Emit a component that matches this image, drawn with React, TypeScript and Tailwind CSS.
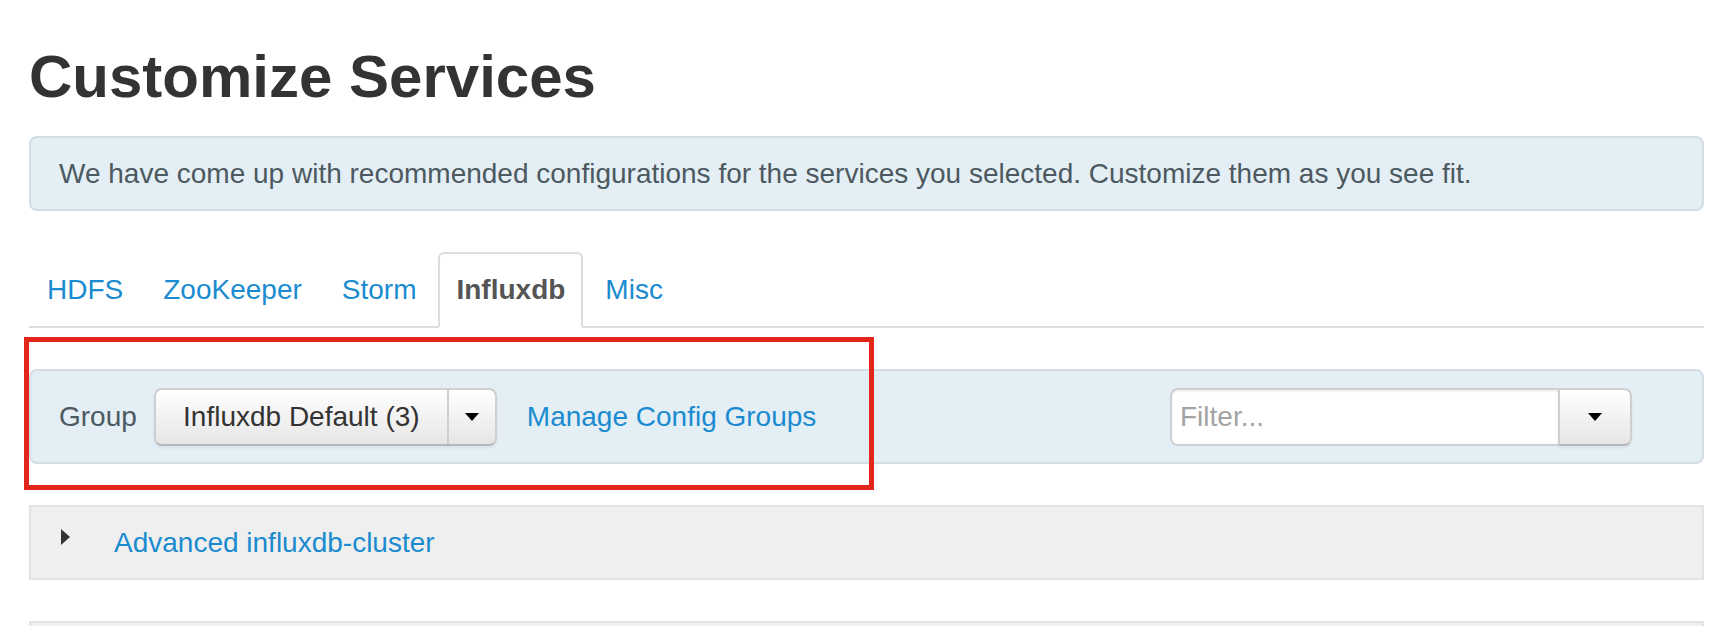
import React from "react";

const tabs = [
  { title: "HDFS", active: false },
  { title: "ZooKeeper", active: false },
  { title: "Storm", active: false },
  { title: "Influxdb", active: true },
  { title: "Misc", active: false },
];

const Caret: React.FC = () => (
  <span className="block w-0 h-0 border-x-[7.5px] border-x-transparent border-t-[8px] border-t-black" />
);

const App: React.FC = () => {
  return (
    <div className="h-[626px] overflow-hidden bg-white font-['Liberation_Sans',Arial,sans-serif] text-[#333]">
      <div className="pl-[29px] pr-[8px]">
        {/* Title */}
        <h2 className="mt-[47px] h-[60px] text-[60px] leading-[60px] font-bold text-[#333]">
          Customize Services
        </h2>

        {/* Info alert */}
        <div className="mt-[29px] flex h-[75px] items-center rounded-[8px] border-2 border-[#d0dde4] bg-[#e4eff5] pl-[28px] text-[28px] leading-[40px] text-[#4d5960]">
          We have come up with recommended configurations for the services you selected. Customize them as you see fit.
        </div>

        {/* Service tabs */}
        <ul className="mt-[41px] flex border-b-2 border-[#ddd]">
          {tabs.map((tab) => (
            <li key={tab.title} className="-mb-[2px] mr-[4px]">
              {tab.active ? (
                <span className="block rounded-t-[6px] border-2 border-[#ddd] border-b-white bg-white px-[16px] pt-[16px] pb-[16px] text-[28px] leading-[40px] font-bold text-[#555]">
                  {tab.title}
                </span>
              ) : (
                <a className="block border-2 border-transparent px-[16px] pt-[16px] pb-[16px] text-[28px] leading-[40px] text-[#1b8bd0]">
                  {tab.title}
                </a>
              )}
            </li>
          ))}
        </ul>

        {/* Config group toolbar */}
        <div className="relative mt-[41px]">
          <div className="flex h-[95px] items-center rounded-[8px] border-2 border-[#d3dde3] bg-[#e4eff5] pl-[28px] pr-[70px]">
            <span className="text-[28px] leading-[40px] text-[#4d5960]">Group</span>
            <div className="ml-[17px] flex h-[58px] rounded-[8px] border-2 border-[#cfcfcf] border-b-[#b8b8b8] bg-linear-to-b from-white to-[#e6e6e6] shadow-[0_2px_3px_rgba(0,0,0,0.06)]">
              <span className="flex w-[291px] items-center justify-center text-[28px] leading-[40px] text-[#333]">
                Influxdb Default (3)
              </span>
              <span className="flex w-[48px] items-center justify-center border-l-2 border-[#cfcfcf]">
                <Caret />
              </span>
            </div>
            <a className="ml-[30px] text-[28px] leading-[40px] text-[#1b8bd0]">Manage Config Groups</a>

            <div className="ml-auto flex h-[58px]">
              <div className="flex w-[388px] items-center rounded-l-[8px] border-2 border-r-0 border-[#cfcfcf] bg-white pl-[8px] shadow-[inset_0_2px_2px_rgba(0,0,0,0.06)]">
                <span className="text-[28px] leading-[40px] text-[#a3a3a3]">Filter...</span>
              </div>
              <span className="flex w-[74px] items-center justify-center rounded-r-[8px] border-2 border-[#cfcfcf] border-b-[#b8b8b8] bg-linear-to-b from-white to-[#e6e6e6] shadow-[0_2px_3px_rgba(0,0,0,0.06)]">
                <Caret />
              </span>
            </div>
          </div>

          {/* annotation frame */}
          <div className="pointer-events-none absolute left-[-5px] top-[-32px] h-[153px] w-[850px] border-[5px] border-[#e2261b]" />
        </div>

        {/* Collapsible sections */}
        <div className="mt-[41px] flex h-[75px] items-center border-2 border-[#e3e3e3] bg-[#efefef] pl-[30px]">
          <span className="-mt-[12px] block w-0 h-0 border-y-[8.5px] border-y-transparent border-l-[9px] border-l-[#333]" />
          <a className="ml-[44px] text-[28px] leading-[40px] text-[#1b8bd0]">Advanced influxdb-cluster</a>
        </div>

        <div className="mt-[41px] h-[75px] border-2 border-[#e3e3e3] bg-[#efefef]" />
      </div>
    </div>
  );
};

export default App;
